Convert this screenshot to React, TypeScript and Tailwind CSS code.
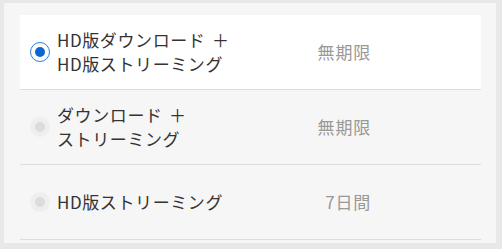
import React from "react";

type Item = { lines: string[]; period: string; selected: boolean; bg: string };

const items: Item[] = [
  { lines: ["HD版ダウンロード ＋", "HD版ストリーミング"], period: "無期限", selected: true, bg: "bg-white" },
  { lines: ["ダウンロード ＋", "ストリーミング"], period: "無期限", selected: false, bg: "" },
  { lines: ["HD版ストリーミング"], period: "7日間", selected: false, bg: "" },
];

function Radio({ selected }: { selected: boolean }) {
  if (selected) {
    return (
      <div className="w-[20px] h-[20px] rounded-full border-[1.5px] border-[#2b7de0] bg-white flex items-center justify-center shrink-0">
        <div className="w-[10px] h-[10px] rounded-full bg-[#0a66d0]" />
      </div>
    );
  }
  return (
    <div className="w-[20px] h-[20px] rounded-full bg-[#eeeeee] flex items-center justify-center shrink-0">
      <div className="w-[10px] h-[10px] rounded-full bg-[#dcdcdc]" />
    </div>
  );
}

export default function App() {
  return (
    <div
      className="w-[502px] h-[249px] bg-[#e8e8e8] pt-[3px] pl-[4px]"
      style={{ fontFamily: '"Noto Sans CJK JP", "Noto Sans", sans-serif' }}
    >
      <div className="w-[492px] h-[240px] bg-[#f6f6f6] pt-[12px] pl-[16px]">
        <div className="w-[461px] flex flex-col">
          {items.map((it, i) => (
            <div
              key={i}
              className={`h-[75px] border-b border-[#dddddd] flex items-center pl-[10px] pr-[110px] ${it.bg}`}
            >
              <Radio selected={it.selected} />
              <div className="ml-[7px] flex-1 text-[17px] leading-[24px] tracking-[0.6px] [word-spacing:2px] text-[#333333]">
                {it.lines.map((l, j) => (
                  <div key={j} className="whitespace-pre">{l}</div>
                ))}
              </div>
              <div className="text-[17px] leading-[24px] tracking-[0.8px] text-[#999999] text-right">{it.period}</div>
            </div>
          ))}
        </div>
      </div>
    </div>
  );
}
